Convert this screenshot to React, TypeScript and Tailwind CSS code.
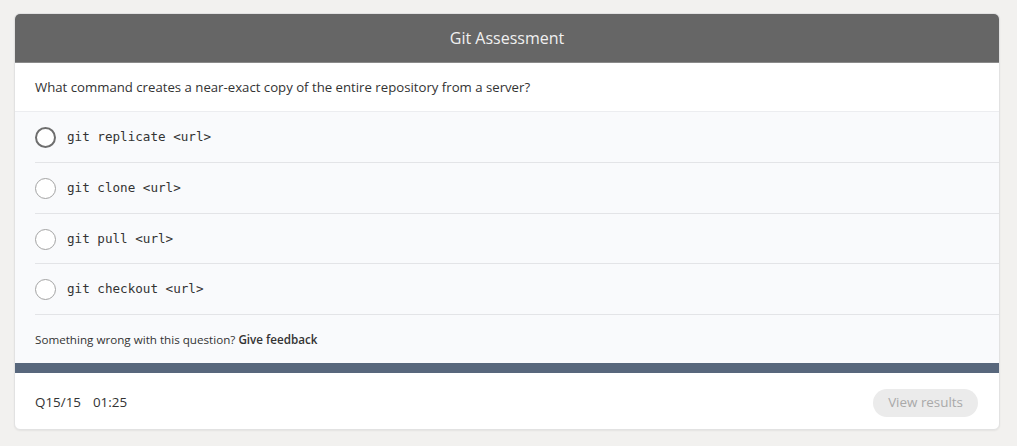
import React from "react";

const options = ["git replicate <url>", "git clone <url>", "git pull <url>", "git checkout <url>"];
const heights = ["h-[51px]", "h-[51px]", "h-[50px]", "h-[51px]"];

export default function App() {
  return (
    <div
      className="w-[1017px] h-[446px] bg-[#f2f1ef] pt-[13px] pl-[14px]"
      style={{ fontFamily: '"Open Sans", "Noto Sans", sans-serif' }}
    >
      <div className="w-[986px] rounded-[6px] bg-white border border-[#e2e2e2] overflow-hidden shadow-[0_1px_2px_rgba(0,0,0,0.06)]">
        <div className="h-[49px] bg-[#666666] flex items-center justify-center border-b border-[#8a8a8a]">
          <span className="text-[16px] text-[#f0f0f0]">Git Assessment</span>
        </div>
        <div className="h-[49px] flex items-center pl-[20px] pt-[2px] border-b border-[#ecedf0]">
          <span className="text-[13.2px] text-[#333]">
            What command creates a near-exact copy of the entire repository from a server?
          </span>
        </div>
        <div className="bg-[#f9fafc] pl-[20px]">
          {options.map((o, i) => (
            <div
              key={o}
              className={`${heights[i]} flex items-center pt-[1px] border-b border-[#e3e4e7]`}
            >
              <span
                className={`w-[21px] h-[21px] rounded-full bg-white border-2 ${
                  i === 0 ? "border-[#6e6e6e]" : "border-[#a3a3a3] border-[1.5px]"
                }`}
              />
              <span
                className="ml-[11px] text-[#333]"
                style={{ fontFamily: '"DejaVu Sans Mono", "Liberation Mono", monospace', fontSize: "12.6px" }}
              >
                {o}
              </span>
            </div>
          ))}
          <div className="h-[48px] flex items-center pt-[1px] text-[11.65px] text-[#333]">
            Something wrong with this question?&nbsp;<span className="font-semibold">Give feedback</span>
          </div>
        </div>
        <div className="h-[10px] bg-[#58677c]" />
        <div className="h-[56px] flex items-center justify-between pl-[20px] pr-[21px] pt-[3px]">
          <div className="text-[13.4px] text-[#333] flex gap-[12px]">
            <span>Q15/15</span>
            <span>01:25</span>
          </div>
          <div className="h-[28px] px-[15px] rounded-full bg-[#ebebeb] flex items-center text-[13.4px] text-[#a9a9a9]">
            View results
          </div>
        </div>
      </div>
    </div>
  );
}
